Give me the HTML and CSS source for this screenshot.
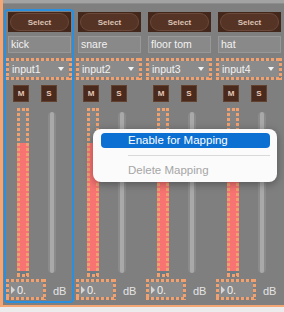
FILE: index.html
```html
<!DOCTYPE html>
<html lang="en">
<head>
  <meta charset="UTF-8" />
  <title>Drum mixer</title>
  <link rel="stylesheet" href="styles.css">
</head>
<body>

  <div class="patch">
    <div class="topbar"></div>

    <div class="rack">
      <div class="strip sel">
        <div class="select"><span class="pill">Select</span></div>
        <div class="name">kick</div>
        <div class="drop dash"><div class="field">input1<i class="arrow"></i></div></div>
        <div class="ms"><span>M</span><span>S</span></div>
        <div class="levels">
          <div class="meter dash"></div>
          <div class="fader"><div class="track"></div></div>
        </div>
        <div class="bottom">
          <div class="num dash"><div class="field"><i class="tri"></i>0.</div></div>
          <span class="db">dB</span>
        </div>
      </div>

      <div class="strip">
        <div class="select"><span class="pill">Select</span></div>
        <div class="name">snare</div>
        <div class="drop dash"><div class="field">input2<i class="arrow"></i></div></div>
        <div class="ms"><span>M</span><span>S</span></div>
        <div class="levels">
          <div class="meter dash"></div>
          <div class="fader"><div class="track"></div></div>
        </div>
        <div class="bottom">
          <div class="num dash"><div class="field"><i class="tri"></i>0.</div></div>
          <span class="db">dB</span>
        </div>
      </div>

      <div class="strip">
        <div class="select"><span class="pill">Select</span></div>
        <div class="name">floor tom</div>
        <div class="drop dash"><div class="field">input3<i class="arrow"></i></div></div>
        <div class="ms"><span>M</span><span>S</span></div>
        <div class="levels">
          <div class="meter dash"></div>
          <div class="fader"><div class="track"></div></div>
        </div>
        <div class="bottom">
          <div class="num dash"><div class="field"><i class="tri"></i>0.</div></div>
          <span class="db">dB</span>
        </div>
      </div>

      <div class="strip">
        <div class="select"><span class="pill">Select</span></div>
        <div class="name">hat</div>
        <div class="drop dash"><div class="field">input4<i class="arrow"></i></div></div>
        <div class="ms"><span>M</span><span>S</span></div>
        <div class="levels">
          <div class="meter dash"></div>
          <div class="fader"><div class="track"></div></div>
        </div>
        <div class="bottom">
          <div class="num dash"><div class="field"><i class="tri"></i>0.</div></div>
          <span class="db">dB</span>
        </div>
      </div>

      <!-- next channel, cut off by the window edge -->
      <div class="strip cut">
        <div class="select"><span class="pill"></span></div>
        <div class="name"></div>
        <div class="drop dash"><div class="field"></div></div>
        <div class="ms"><span></span><span></span></div>
        <div class="levels">
          <div class="meter dash"></div>
        </div>
        <div class="bottom">
          <div class="num dash"><div class="field"></div></div>
        </div>
      </div>
    </div>

    <div class="ctx">
      <div class="item hot">Enable for Mapping</div>
      <hr>
      <div class="item off">Delete Mapping</div>
    </div>
  </div>

  <div class="floor"></div>

</body>
</html>
```

FILE: styles.css
```css
body {
  margin: 0;
  background: #ececec;
  font-family: "Liberation Sans", Arial, sans-serif;
}

.patch {
  position: relative;
  height: 305px;
  background: #7f7f7f;
  border-left: 3px solid #f4a674;
  border-bottom: 2px solid #f4a674;
  overflow: hidden;
}

.topbar {
  height: 3px;
  background: #a3a3a3;
  border-bottom: 1px solid #8d8d8d;
}

.rack {
  display: flex;
  height: 301px;
  padding-left: 1px;
}

.strip {
  flex: 0 0 69px;
  box-sizing: border-box;
  height: 294px;
  margin-top: 5px;
  border: 2px solid transparent;
  border-radius: 4px;
  display: flex;
  flex-direction: column;
}

.strip.sel {
  border-color: #2b8fdf;
}

.strip.cut {
  height: auto;
  margin-top: 0;
  padding-top: 7px;
  border: 0;
  border-left: 2px solid #c9c9c9;
  border-radius: 0;
}

.strip.cut > * {
  margin-left: 0;
}

.strip.cut .ms,
.strip.cut .levels {
  margin-left: 1px;
}

/* orange dashed selection frame */
.dash {
  box-sizing: border-box;
  padding: 3px;
  background:
    repeating-linear-gradient(90deg, #f2a06e 0 3px, transparent 3px 5px) top / 100% 3px no-repeat,
    repeating-linear-gradient(90deg, #f2a06e 0 3px, transparent 3px 5px) bottom / 100% 3px no-repeat,
    repeating-linear-gradient(#f2a06e 0 3px, transparent 3px 5px) left / 3px 100% no-repeat,
    repeating-linear-gradient(#f2a06e 0 3px, transparent 3px 5px) right / 3px 100% no-repeat,
    var(--fill, transparent);
}

.select {
  box-sizing: border-box;
  height: 20px;
  margin: 1px 1px 0 2px;
  padding: 1px 2px;
  display: flex;
  background: #43271a;
}

.pill {
  flex: 1;
  display: flex;
  align-items: center;
  justify-content: center;
  background: #553425;
  border: 1px solid #6b4839;
  border-radius: 10px;
  color: #dcc2b4;
  font-size: 8px;
  font-weight: bold;
}

.name {
  box-sizing: border-box;
  height: 17px;
  margin: 4px 1px 0 2px;
  padding-left: 2px;
  background: #898989;
  border: 1px solid #989898;
  color: #f2f2f2;
  font-size: 10.5px;
  line-height: 15px;
  white-space: nowrap;
  overflow: hidden;
}

.drop {
  width: 66px;
  height: 22px;
  margin-top: 5px;
}

.field {
  box-sizing: border-box;
  height: 100%;
  display: flex;
  align-items: center;
  background: #8b8b8b;
  color: #f2f2f2;
  font-size: 10.5px;
}

.drop .field {
  justify-content: space-between;
  padding: 0 5px 0 3px;
}

.arrow {
  width: 0;
  height: 0;
  border-top: 4px solid #f4f4f4;
  border-left: 3.5px solid transparent;
  border-right: 3.5px solid transparent;
}

.ms {
  display: flex;
  gap: 12px;
  margin: 5px 0 0 7px;
}

.ms span {
  box-sizing: border-box;
  width: 16px;
  height: 17px;
  display: flex;
  align-items: center;
  justify-content: center;
  background: #4a2a1c;
  border: 1px solid #62412f;
  color: #e6c8b8;
  font-size: 8px;
  font-weight: bold;
}

.levels {
  display: flex;
  height: 169px;
  margin: 6px 0 0 11px;
}

.meter {
  width: 12px;
  --fill: linear-gradient(#858585 0 35px, #f77472 35px calc(100% - 6px), #6f7b83 calc(100% - 6px));
}

.fader {
  width: 8px;
  margin: 4px 0 4px 19px;
  display: flex;
  justify-content: center;
  background: #8b8b8b;
  border-radius: 4px;
}

.track {
  width: 4px;
  background: #a9a9a9;
  border-radius: 2px;
}

.bottom {
  display: flex;
  align-items: center;
  margin-top: 2px;
}

.num {
  width: 40px;
  height: 21px;
}

.num .field {
  font-size: 11px;
}

.tri {
  width: 0;
  height: 0;
  margin: 0 2px;
  border-left: 4px solid #d6d6d6;
  border-top: 4px solid transparent;
  border-bottom: 4px solid transparent;
}

.db {
  margin: 3px 0 0 7px;
  color: #e4e4e4;
  font-size: 11px;
}

.floor {
  height: 6px;
}

/* context menu */
.ctx {
  position: absolute;
  left: 90px;
  top: 129px;
  width: 184px;
  height: 53px;
  box-sizing: border-box;
  padding: 4px 7px 0 8px;
  background: #fbfbfb;
  border-radius: 8px;
  box-shadow: 0 2px 8px rgba(0, 0, 0, 0.35);
  font-size: 11.5px;
}

.ctx .item {
  height: 15px;
  line-height: 15px;
  padding-left: 27px;
  border-radius: 4px;
  color: #222;
}

.ctx .hot {
  background: #0c70d2;
  color: #fff;
}

.ctx hr {
  margin: 7px 0 0 27px;
  border: 0;
  border-top: 1px solid #d9d9d9;
}

.ctx .off {
  margin-top: 7px;
  color: #a6a6a6;
}
```
